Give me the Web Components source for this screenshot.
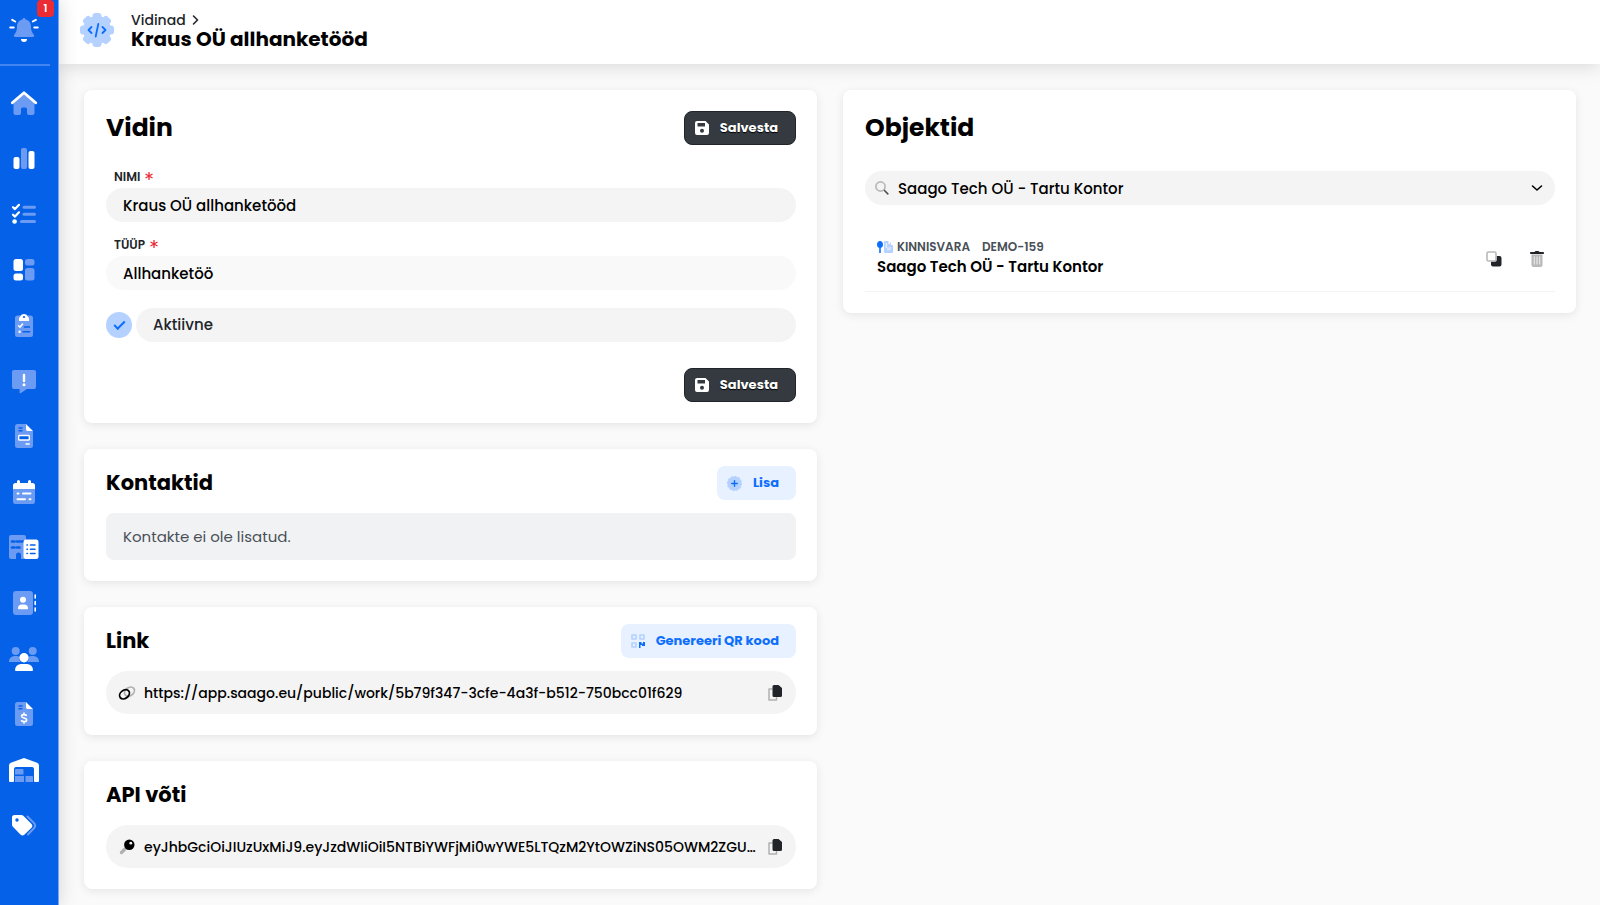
<!DOCTYPE html>
<html lang="et">
<head>
<meta charset="utf-8">
<title>Kraus OÜ allhanketööd</title>
<meta name="viewport" content="width=device-width, initial-scale=1">
<style>
  html, body { margin: 0; padding: 0; }
  body { background: #fafafa; color: #000; font-family: Poppins, Inter, "Open Sans", sans-serif; font-size: 14px; }
</style>
</head>
<body>
<saago-app></saago-app>
<script>
const RESET = `
  *, *::before, *::after { box-sizing: border-box; }
  button, input, select { font: inherit; color: inherit; margin: 0; border: 0; }
  button { cursor: pointer; }
  h1, h2, ul, p { margin: 0; padding: 0; }
  ul { list-style: none; }
  svg { display: block; }
`;

/* Two-tone icons: .a is the full tone, .b the faded one, .k the cut-out tone. */
const ICONS = {
  bell: ['0 0 30 24', `<path class="b" d="M15 0c.9 0 1.5.6 1.5 1.5C20 2.200 22 5 22 8.500c0 4 .9 6 2.800 8.200.9 1.100.3 2.300-1 2.300H6.200c-1.300 0-1.900-1.200-1-2.300C7.100 14.500 8 12.500 8 8.500 8 5 10 2.200 13.500 1.500 13.500.6 14.100 0 15 0z"/><path class="a" d="M12 21h6a3 3 0 0 1-6 0z"/><path class="as" stroke-width="2" d="M1.200 9.500h3.500M28.800 9.500h-3.500M3.200 1.800l3 1.700M26.800 1.800l-3 1.700"/>`],
  home: ['0 0 30 24', `<path class="b" d="M4.500 11.500 15 3l10.500 8.500V22a2 2 0 0 1-2 2H20a2 2 0 0 1-2-2v-4a1.500 1.500 0 0 0-1.500-1.500h-3A1.500 1.500 0 0 0 12 18v4a2 2 0 0 1-2 2H6.500a2 2 0 0 1-2-2z"/><path class="as" stroke-width="2.800" stroke-linejoin="round" d="M3.300 11.800 15 1.700l11.700 10.100"/>`],
  chart: ['0 0 30 24', `<rect class="a" x="4.500" y="11" width="6" height="12" rx="2"/><rect class="b" x="12" y="2" width="6" height="21" rx="2"/><rect class="a" x="19.500" y="5" width="6" height="18" rx="2"/>`],
  tasks: ['0 0 30 24', `<path class="as" stroke-width="2.200" stroke-linejoin="round" d="M4 5.200l2 1.900 4-4.300M4 12.700l2 1.900 4-4.300"/><circle class="a" cx="5.600" cy="19.500" r="2.300"/><path class="bs" stroke-width="3" d="M15 5.200h10.500M15 12.300h10.500M12.500 19.500h13"/>`],
  grid: ['0 0 30 24', `<rect class="a" x="4.500" y="1" width="9.500" height="12" rx="2.500"/><rect class="a" x="4.500" y="15.500" width="9.500" height="7" rx="2.500"/><rect class="b" x="16" y="1" width="9.500" height="6.500" rx="2.500"/><rect class="b" x="16" y="10" width="9.500" height="12.500" rx="2.500"/>`],
  clipboard: ['0 0 30 24', `<rect class="b" x="6" y="2.500" width="18" height="21.500" rx="2.500"/><path class="a" d="M10 8V5.500A2 2 0 0 1 11.200 3.700 4 4 0 0 1 18.800 3.700 2 2 0 0 1 20 5.500V8z"/><circle class="k" cx="15" cy="4" r="1.100"/><path class="as" stroke-width="1.500" d="M9.500 12.800l1.500 1.300 2.600-3"/><circle class="a" cx="10.600" cy="18.700" r="1.200"/><path class="ks" stroke-width="1.500" d="M15.500 14h5M14 18.700h6.500"/>`],
  message: ['0 0 30 24', `<path class="b" d="M5 1h20a2 2 0 0 1 2 2v15a2 2 0 0 1-2 2h-7l-6.500 4.200c-.4.3-.9 0-.9-.5V20H5a2 2 0 0 1-2-2V3a2 2 0 0 1 2-2z"/><path class="as" stroke-width="2.400" d="M15 6v6"/><circle class="a" cx="15" cy="15.800" r="1.500"/>`],
  file: ['0 0 30 24', `<path class="b" d="M8.500 0H17v5.500a1.500 1.500 0 0 0 1.500 1.500H24v14.500a2.500 2.500 0 0 1-2.500 2.500h-13A2.500 2.500 0 0 1 6 21.500v-19A2.500 2.500 0 0 1 8.500 0z"/><path class="a" d="M17 0l7 7h-5.500A1.500 1.500 0 0 1 17 5.500z"/><path class="ks" stroke-width="1.400" d="M10 4h3M10 6.800h3"/><rect class="k" stroke="#fff" stroke-width="1.400" x="9.700" y="11.500" width="10.600" height="4.500" rx=".8"/><path class="as" stroke-width="1.400" d="M17 20h3.200"/>`],
  calendar: ['0 0 30 24', `<path class="b" d="M4 9h22v12.500a2.500 2.500 0 0 1-2.500 2.500h-17A2.500 2.500 0 0 1 4 21.500z"/><path class="a" d="M4 9V5.500A2.500 2.500 0 0 1 6.500 3H8V1.500a1.500 1.500 0 0 1 3 0V3h8V1.500a1.500 1.500 0 0 1 3 0V3h1.500A2.500 2.500 0 0 1 26 5.500V9z"/><path class="as" stroke-width="2" d="M8.500 13.500h1M14 13.500h7.500M8.500 19.300h7.500M20.500 19.300h1"/>`],
  building: ['0 0 30 24', `<path class="b" d="M2 0h13a2 2 0 0 1 2 2v3a2 2 0 0 0-2 2v17h-3v-4a2.500 2.500 0 0 0-5 0v4H2a2 2 0 0 1-2-2V2a2 2 0 0 1 2-2z"/><path class="ks" stroke-width="2.600" stroke-linecap="butt" d="M3 6.500h2.500M8 6.500h2.500M12.500 6.500H15M3 12.500h2.500M8 12.500h2.500"/><rect class="a" x="14.500" y="4.500" width="15" height="19.500" rx="2.500"/><path class="ks" stroke-width="1.600" d="M18 10h.4M18 14.200h.4M18 18.500h.4M21.500 10h4.500M21.500 14.200h4.500M21.500 18.500h4.500"/>`],
  contact: ['0 0 30 24', `<rect class="b" x="4" y="0" width="20" height="24" rx="3"/><circle class="a" cx="14" cy="8.800" r="3"/><path class="a" d="M9 17.500a4 4 0 0 1 4-4h2a4 4 0 0 1 4 4 .7.7 0 0 1-.7.7H9.700a.7.7 0 0 1-.7-.7z"/><path class="as" stroke-width="1.600" d="M26.200 4v3M26.200 10.500v3M26.200 17v3"/>`],
  users: ['0 0 30 24', `<circle class="b" cx="6.700" cy="4" r="4"/><circle class="b" cx="23.700" cy="4" r="4"/><path class="b" d="M0 14.500A5.500 5.500 0 0 1 5.500 9h2c1 0 1.800.2 2.500.6-.3 2.200.3 4 1.800 5.400H.6a.5.5 0 0 1-.6-.5zM30 14.500A5.500 5.500 0 0 0 24.500 9h-2c-.9 0-1.700.2-2.500.6.3 2.200-.3 4-1.800 5.400h11.200a.5.5 0 0 0 .6-.5z"/><circle class="a" cx="15" cy="10.700" r="4.700"/><path class="a" d="M6 23a6 6 0 0 1 6-6h6a6 6 0 0 1 6 6 1 1 0 0 1-1 1H7a1 1 0 0 1-1-1z"/>`],
  invoice: ['0 0 30 24', `<path class="b" d="M8.500 0H17v5.500a1.500 1.500 0 0 0 1.500 1.500H24v14.500a2.500 2.500 0 0 1-2.500 2.500h-13A2.500 2.500 0 0 1 6 21.500v-19A2.500 2.500 0 0 1 8.500 0z"/><path class="a" d="M17 0l7 7h-5.500A1.500 1.500 0 0 1 17 5.500z"/><path class="ks" stroke-width="1.400" d="M10 4h3M10 6.800h3"/><path class="as" stroke-width="1.600" d="M17.300 13.300c-.8-.5-1.600-.7-2.500-.7-1.300 0-2.200.6-2.200 1.600 0 2.400 5 1.100 5 3.700 0 1.100-1 1.700-2.400 1.700-1 0-1.900-.3-2.700-.8M15 11v1.500M15 19.700v1.400"/>`],
  warehouse: ['0 0 30 24', `<path class="a" d="M0 7.500a3 3 0 0 1 1.900-2.800L14.300.2a2 2 0 0 1 1.400 0l12.400 4.500A3 3 0 0 1 30 7.500V23a1 1 0 0 1-1 1h-3a1 1 0 0 1-1-1V11a2 2 0 0 0-2-2H7a2 2 0 0 0-2 2v12a1 1 0 0 1-1 1H1a1 1 0 0 1-1-1z"/><path class="b" d="M6 12a1 1 0 0 1 1-1h6.500a1 1 0 0 1 1 1v4.500H6zM6 18h9v6H6zM16.500 18H23a1 1 0 0 1 1 1v5h-7.500z"/>`],
  tags: ['0 0 30 24', `<path class="bs" stroke-width="2" d="M18.500 3.500l6.600 6.600a3.600 3.600 0 0 1 0 5L19 21.500"/><path class="a" d="M3 4.500A2.500 2.500 0 0 1 5.500 2h6.800a3 3 0 0 1 2 .8l8 7.900a3 3 0 0 1 0 4.200l-6.700 6.500a3 3 0 0 1-4.200 0l-7.500-7.600a3 3 0 0 1-.9-2.200z"/><circle class="k" cx="8" cy="7" r="1.700"/>`],
  gear: ['0 0 34 34', `<circle class="b" cx="17" cy="17" r="14"/><rect class="b" x="12.500" y="0" width="9" height="34" rx="3"/><rect class="b" x="12.500" y="0" width="9" height="34" rx="3" transform="rotate(45 17 17)"/><rect class="b" x="12.500" y="0" width="9" height="34" rx="3" transform="rotate(90 17 17)"/><rect class="b" x="12.500" y="0" width="9" height="34" rx="3" transform="rotate(135 17 17)"/><path class="as" stroke-width="1.800" stroke-linejoin="round" d="M11.500 14l-3 3 3 3M22.500 14l3 3-3 3M18.300 11l-2.600 12.500"/>`],
  right: ['0 0 8 10', `<path class="as" stroke-width="1.600" stroke-linejoin="round" d="M2.500 1l4 4-4 4"/>`],
  down: ['0 0 12 8', `<path class="as" stroke-width="1.600" stroke-linejoin="round" d="M1.500 2l4.500 4 4.500-4"/>`],
  save: ['0 0 14 14', `<path class="a" fill-rule="evenodd" d="M2 0h8.500L14 3.500V12a2 2 0 0 1-2 2H2a2 2 0 0 1-2-2V2a2 2 0 0 1 2-2zm.5 2v3.500h7.500V2zM7 7.700a2 2 0 1 0 0 4 2 2 0 0 0 0-4z"/>`],
  plus: ['0 0 15 15', `<circle class="b" cx="7.500" cy="7.500" r="7"/><circle class="bs" cx="7.500" cy="7.500" r="7" stroke-width="1.200" stroke-dasharray="1.200 2.465"/><path class="as" stroke-width="1.400" d="M7.500 4.700v5.600M4.700 7.500h5.600"/>`],
  qr: ['0 0 14 14', `<path class="bs" stroke-width="1.600" stroke-linejoin="round" d="M1 1h4v4H1zM9 1h4v4H9zM1 9h4v4H1z"/><path class="a" d="M8 8h2.500v1.500H12V8h2v4h-3v-1H9.500v3H8z"/>`],
  link: ['0 0 18 14', `<ellipse class="bs" cx="11.500" cy="5.700" rx="5.400" ry="4" stroke-width="1.800" transform="rotate(-38 11.500 5.700)"/><ellipse class="as" cx="6.500" cy="8.300" rx="5.400" ry="4" stroke-width="1.800" transform="rotate(-38 6.500 8.300)"/>`],
  key: ['0 0 16 16', `<path class="bs" stroke-width="3.200" d="M2.500 13.500l5-5"/><circle class="a" cx="10.300" cy="5.700" r="5.200"/><circle cx="11.800" cy="4.200" r="1.400" fill="#f4f4f4"/>`],
  copy: ['0 0 14 16', `<path class="bs" stroke-width="1.500" stroke-linejoin="round" d="M4 4H1v11h7.500v-2.500"/><path class="a" d="M6 0h4.500L14 3v7.500a1.500 1.500 0 0 1-1.500 1.500H6a1.500 1.500 0 0 1-1.500-1.500v-9A1.500 1.500 0 0 1 6 0z"/>`],
  clone: ['0 0 16 16', `<path class="a" d="M10.500 5H13.500A2 2 0 0 1 15.500 7v6.500a2 2 0 0 1-2 2H7a2 2 0 0 1-2-2V10.500h4a1.500 1.500 0 0 0 1.500-1.500z"/><rect class="bs" x="1" y="1" width="9" height="9" rx="1.500" stroke-width="1.600" style="fill:#fff"/>`],
  trash: ['0 0 14 16', `<path class="b" d="M1.500 3.500h11V14a2 2 0 0 1-2 2h-7a2 2 0 0 1-2-2z"/><path d="M4.300 5.500v8M7 5.500v8M9.700 5.500v8" stroke="#fff" stroke-width="1" opacity=".8"/><path class="a" d="M4.500 1 5 .4A.8.8 0 0 1 5.600 0h2.800a.8.8 0 0 1 .6.4L9.500 1h3.700a.8.8 0 0 1 .8.8v.4a.8.8 0 0 1-.8.8H.8a.8.8 0 0 1-.8-.8v-.4A.8.8 0 0 1 .8 1z"/>`],
  search: ['0 0 14 14', `<circle class="bs" cx="5.500" cy="5.500" r="4.600" stroke-width="1.700"/><path class="as" stroke-width="1.700" d="M9.500 9.500l3.300 3.300"/>`],
  city: ['0 0 16 12', `<path class="a" d="M3 0c1.700 0 3 1.400 3 3.500 0 1.800-.8 3-2.200 3.300V12H2.200V6.800C.8 6.500 0 5.300 0 3.500 0 1.400 1.300 0 3 0z"/><path class="b" d="M8 0h3.500v3H13V1.500h1V4h1a1 1 0 0 1 1 1v6a1 1 0 0 1-1 1H8a1 1 0 0 1-1-1V1a1 1 0 0 1 1-1z"/><path stroke="#fff" stroke-width=".9" fill="none" d="M9.300 2v5M11 6.500v3M13 6v3"/>`]
};

class SaagoIcon extends HTMLElement {
  connectedCallback() {
    const [box, body] = ICONS[this.getAttribute('name')];
    const [, , w, h] = box.split(' ');
    this.attachShadow({ mode: 'open' }).innerHTML = `
      <style>
        :host { display: block; flex: none; color: inherit; }
        svg { display: block; overflow: visible; }
        .a { fill: currentColor; }
        .b { fill: var(--tone, #b9b9b9); }
        .k { fill: var(--cut, #fff); }
        .as, .bs, .ks { fill: none; stroke-linecap: round; }
        .as { stroke: currentColor; }
        .bs { stroke: var(--tone, #b9b9b9); }
        .ks { stroke: var(--cut, #fff); }
      </style>
      <svg width="${w}" height="${h}" viewBox="${box}" aria-hidden="true">${body}</svg>`;
  }
}

class SaagoSidebar extends HTMLElement {
  connectedCallback() {
    const items = [['home', 'Avaleht'], ['chart', 'Statistika'], ['tasks', 'Ülesanded'], ['grid', 'Töölaud'], ['clipboard', 'Tööd'],
      ['message', 'Teated'], ['file', 'Dokumendid'], ['calendar', 'Kalender'], ['building', 'Objektid'], ['contact', 'Kontaktid'],
      ['users', 'Kasutajad'], ['invoice', 'Arved'], ['warehouse', 'Ladu'], ['tags', 'Sildid']];
    this.attachShadow({ mode: 'open' }).innerHTML = `
      <style>${RESET}
        :host { display: flex; flex-direction: column; width: 59px; min-height: 100vh; color: #fff;
          --tone: #6b9bf3; --cut: #0561e8;
          background: #0561e8; border-right: 1px solid #79a5f8; box-shadow: 0 0 18px rgba(0,0,0,.16); }
        .top { position: relative; height: 66px; width: 50px; padding: 18px 0 0 9px; border-bottom: 2px solid #4484f0; }
        .top button { display: block; padding: 0; background: none; color: inherit; }
        .badge { position: absolute; left: 37px; top: 0; width: 17px; height: 17px; border-radius: 4px;
          background: #ed2b33; font-size: 11px; line-height: 17px; font-weight: 600; text-align: center; }
        nav { flex: 1; display: flex; padding: 9px 0 52px; }
        ul { display: flex; flex-direction: column; flex: 1; }
        li { flex: 1; display: flex; align-items: center; padding-left: 9px; }
        a { color: inherit; }
      </style>
      <div class="top">
        <button aria-label="Teavitused"><saago-icon name="bell"></saago-icon></button>
        <span class="badge">1</span>
      </div>
      <nav><ul>${items.map(([i, l]) => `<li><a href="#${i}" aria-label="${l}"><saago-icon name="${i}"></saago-icon></a></li>`).join('')}</ul></nav>`;
  }
}

class SaagoHeader extends HTMLElement {
  connectedCallback() {
    this.attachShadow({ mode: 'open' }).innerHTML = `
      <style>${RESET}
        :host { display: flex; align-items: center; gap: 17px; height: 64px; padding: 0 24px 4px 21px;
          background: #fff; box-shadow: 0 2px 18px rgba(0,0,0,.14); }
        .mark { color: #0d6efd; --tone: #b5d1ff; }
        .crumb { display: flex; align-items: center; gap: 5px; font-size: 14px; line-height: 18px; font-weight: 500; color: #212529; }
        .crumb a { color: inherit; text-decoration: none; }
        h1 { font-size: 20px; line-height: 20px; font-weight: 700; color: #000; }
      </style>
      <saago-icon class="mark" name="gear"></saago-icon>
      <div>
        <div class="crumb"><a href="#vidinad">Vidinad</a><saago-icon name="right"></saago-icon></div>
        <h1><slot></slot></h1>
      </div>`;
  }
}

class SaagoCard extends HTMLElement {
  connectedCallback() {
    this.attachShadow({ mode: 'open' }).innerHTML = `
      <style>${RESET}
        :host { display: block; padding: 17px 21px 21px 22px; border-radius: 8px; background: #fff;
          box-shadow: 0 2px 10px rgba(0,0,0,.09); }
        :host([large]) { padding-top: 21px; }
        header { display: flex; align-items: center; justify-content: space-between; height: 34px; margin-bottom: 13px; }
        :host([large]) header { margin-bottom: 24px; }
        h2 { font-size: 21px; line-height: 32px; font-weight: 700; }
        :host([large]) h2 { font-size: 25px; }
      </style>
      <header><h2>${this.getAttribute('heading')}</h2><slot name="action"></slot></header>
      <slot></slot>`;
  }
}

class SaagoButton extends HTMLElement {
  connectedCallback() {
    this.attachShadow({ mode: 'open' }).innerHTML = `
      <style>${RESET}
        :host { display: block; }
        button { display: flex; align-items: center; gap: 11px; height: 34px; padding: 0 17px 0 10px; border-radius: 8px;
          background: #e7f1ff; color: #0d6efd; font-size: 13px; line-height: 20px; font-weight: 700; --tone: #b5d1ff; white-space: nowrap; }
        :host([dark]) button { background: #343a40; color: #fff; border: 1px solid #212529; padding: 0 17px 0 10px; text-shadow: 0 1px 1px #000; }
      </style>
      <button type="button"><saago-icon name="${this.getAttribute('icon')}"></saago-icon><slot></slot></button>`;
  }
}

class SaagoField extends HTMLElement {
  connectedCallback() {
    this.attachShadow({ mode: 'open' }).innerHTML = `
      <style>${RESET}
        :host { display: block; margin-bottom: 15px; }
        label { display: flex; gap: 5px; height: 16px; margin: 0 0 3px 8px; font-size: 12px; line-height: 16px; font-weight: 600; color: #212529; }
        label svg { margin-top: 3px; }
        input { display: block; width: 100%; height: 34px; padding: 0 17px; border-radius: 17px; background: #f4f4f4;
          font-size: 15px; font-weight: 500; color: #000; }
        input:read-only { background: #f9f9f9; }
      </style>
      <label for="f">${this.getAttribute('label')}
        <svg width="8" height="8" viewBox="0 0 8 8" aria-hidden="true"><path d="M4 0v8M.5 2l7 4M7.500 2l-7 4" stroke="#ea2b36" stroke-width="1.300"/></svg></label>
      <input id="f" type="text" required value="${this.getAttribute('value')}" ${this.hasAttribute('locked') ? 'readonly' : ''}>`;
  }
}

class SaagoToggle extends HTMLElement {
  connectedCallback() {
    this.attachShadow({ mode: 'open' }).innerHTML = `
      <style>${RESET}
        :host { display: flex; align-items: center; gap: 4px; margin: 18px 0 26px; }
        input { appearance: none; display: grid; place-items: center; flex: none; width: 26px; height: 26px; border-radius: 50%; background: #b5d1ff; }
        input:checked::before { content: ""; width: 11px; height: 6px; margin-bottom: 3px; border: solid #0d6efd; border-width: 0 0 2px 2px; transform: rotate(-45deg); }
        label { flex: 1; padding: 0 17px; border-radius: 17px; background: #f4f4f4; font-size: 15px; line-height: 34px; font-weight: 500; color: #212529; }
      </style>
      <input id="t" type="checkbox" checked><label for="t"><slot></slot></label>`;
  }
}

class SaagoCopyRow extends HTMLElement {
  connectedCallback() {
    this.attachShadow({ mode: 'open' }).innerHTML = `
      <style>${RESET}
        :host { display: flex; align-items: center; height: 43px; padding: 0 14px 0 12px; border-radius: 22px; background: #f4f4f4; }
        .lead { display: grid; place-items: center; width: 18px; margin-right: 8px; --tone: #b0b0b0; }
        .text { flex: 1; min-width: 0; overflow: hidden; white-space: nowrap; font-size: 14px; line-height: 24px; font-weight: 500; }
        button { padding: 0; background: none; color: #212529; --tone: #b0b0b0; }
      </style>
      <span class="lead"><saago-icon name="${this.getAttribute('icon')}"></saago-icon></span>
      <div class="text"><slot></slot></div>
      <button type="button" aria-label="Kopeeri"><saago-icon name="copy"></saago-icon></button>`;
  }
}

class SaagoPicker extends HTMLElement {
  connectedCallback() {
    this.attachShadow({ mode: 'open' }).innerHTML = `
      <style>${RESET}
        :host { display: grid; grid-template-columns: 10px 14px 1fr 12px 12px; align-items: center; margin: 26px 0 22px; }
        select { grid-area: 1 / 1 / 2 / 6; appearance: none; width: 100%; height: 34px; padding: 0 33px; border-radius: 17px;
          background: #f4f4f4; font-size: 15px; font-weight: 500; color: #000; }
        .find { grid-area: 1 / 2; z-index: 1; pointer-events: none; color: #555; }
        .open { grid-area: 1 / 4; z-index: 1; pointer-events: none; }
      </style>
      <select aria-label="Objekt"><option>${this.getAttribute('value')}</option></select>
      <saago-icon class="find" name="search"></saago-icon>
      <saago-icon class="open" name="down"></saago-icon>`;
  }
}

class SaagoObject extends HTMLElement {
  connectedCallback() {
    this.attachShadow({ mode: 'open' }).innerHTML = `
      <style>${RESET}
        :host { display: flex; align-items: center; gap: 28px; padding: 10px 11px 11px 12px; border-bottom: 1px solid #f4f4f4; }
        .info { flex: 1; padding-bottom: 3px; }
        .meta { display: flex; align-items: center; font-size: 12px; line-height: 20px; font-weight: 600; color: #495057; }
        .meta saago-icon { color: #0d6efd; --tone: #b5d1ff; margin-right: 4px; }
        .meta span + span { margin-left: 12px; }
        .name { font-size: 15px; line-height: 20px; font-weight: 600; color: #000; }
        button { padding: 0; background: none; color: #212529; }
      </style>
      <div class="info">
        <div class="meta"><saago-icon name="city"></saago-icon><span>${this.getAttribute('kind')}</span><span>${this.getAttribute('code')}</span></div>
        <div class="name"><slot></slot></div>
      </div>
      <button type="button" aria-label="Kopeeri"><saago-icon name="clone"></saago-icon></button>
      <button type="button" aria-label="Kustuta"><saago-icon name="trash"></saago-icon></button>`;
  }
}

class SaagoApp extends HTMLElement {
  connectedCallback() {
    this.attachShadow({ mode: 'open' }).innerHTML = `
      <style>${RESET}
        :host { display: flex; min-height: 100vh; }
        saago-sidebar { flex: none; z-index: 1; }
        .page { flex: 1; min-width: 0; }
        main { display: grid; grid-template-columns: 1fr 1fr; gap: 26px; align-items: start; padding: 26px 24px 16px 25px; }
        .col { display: grid; gap: 26px; min-width: 0; }
        .end { display: flex; justify-content: flex-end; }
        .empty { padding: 11px 17px; border-radius: 8px; background: #f1f2f4; font-size: 15px; line-height: 25px; color: #495057; }
        saago-card, saago-copy-row { position: relative; min-width: 0; }
        a { color: inherit; text-decoration: none; }
      </style>
      <saago-sidebar></saago-sidebar>
      <div class="page">
        <saago-header>Kraus OÜ allhanketööd</saago-header>
        <main>
          <div class="col">
            <saago-card large heading="Vidin">
              <saago-button slot="action" dark icon="save">Salvesta</saago-button>
              <saago-field label="NIMI" value="Kraus OÜ allhanketööd"></saago-field>
              <saago-field label="TÜÜP" value="Allhanketöö" locked></saago-field>
              <saago-toggle>Aktiivne</saago-toggle>
              <div class="end"><saago-button dark icon="save">Salvesta</saago-button></div>
            </saago-card>
            <saago-card heading="Kontaktid">
              <saago-button slot="action" icon="plus">Lisa</saago-button>
              <p class="empty">Kontakte ei ole lisatud.</p>
            </saago-card>
            <saago-card heading="Link">
              <saago-button slot="action" icon="qr">Genereeri QR kood</saago-button>
              <saago-copy-row icon="link"><a href="https://app.saago.eu/public/work/5b79f347-3cfe-4a3f-b512-750bcc01f629">https://app.saago.eu/public/work/5b79f347-3cfe-4a3f-b512-750bcc01f629</a></saago-copy-row>
            </saago-card>
            <saago-card heading="API võti">
              <saago-copy-row icon="key">eyJhbGciOiJIUzUxMiJ9.eyJzdWIiOiI5NTBiYWFjMi0wYWE5LTQzM2YtOWZiNS05OWM2ZGU…</saago-copy-row>
            </saago-card>
          </div>
          <div class="col">
            <saago-card large heading="Objektid">
              <saago-picker value="Saago Tech OÜ - Tartu Kontor"></saago-picker>
              <saago-object kind="KINNISVARA" code="DEMO-159">Saago Tech OÜ - Tartu Kontor</saago-object>
            </saago-card>
          </div>
        </main>
      </div>`;
  }
}

customElements.define('saago-icon', SaagoIcon);
customElements.define('saago-sidebar', SaagoSidebar);
customElements.define('saago-header', SaagoHeader);
customElements.define('saago-card', SaagoCard);
customElements.define('saago-button', SaagoButton);
customElements.define('saago-field', SaagoField);
customElements.define('saago-toggle', SaagoToggle);
customElements.define('saago-copy-row', SaagoCopyRow);
customElements.define('saago-picker', SaagoPicker);
customElements.define('saago-object', SaagoObject);
customElements.define('saago-app', SaagoApp);
</script>
</body>
</html>
